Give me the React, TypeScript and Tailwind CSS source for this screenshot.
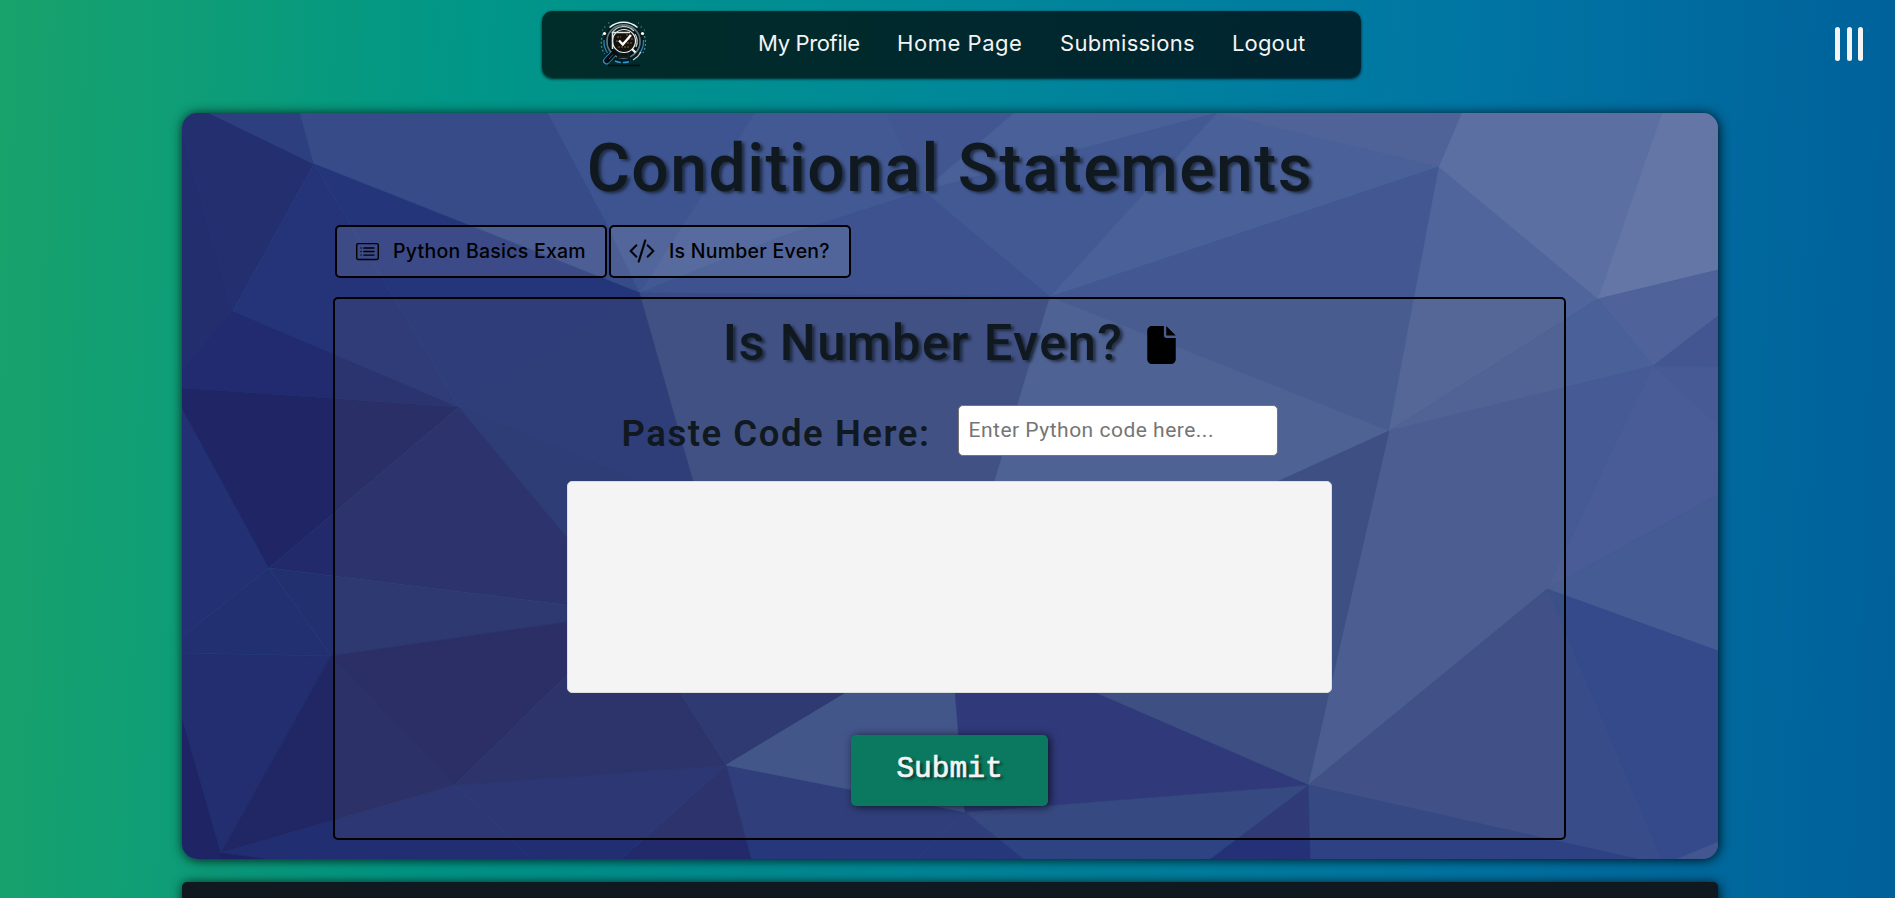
import { FaFile } from "react-icons/fa6";
import { BsCardList, BsCodeSlash } from "react-icons/bs";

type Facet = [points: string, color: string];

const facets: Facet[] = [
  ["182,113 209,113 314,164 233,311 182,372", "#242f70"],
  ["182,130 233,311 182,372", "#232e6f"],
  ["209,113 300,113 314,164", "#2e3f7f"],
  ["300,113 548,113 605,220 640,293 314,164", "#364b87"],
  ["548,113 755,113 640,293 605,220", "#3e5490"],
  ["755,113 887,113 923,191 780,237 640,293", "#435993"],
  ["887,113 1014,113 923,191", "#425791"],
  ["1014,113 1217,113 923,191", "#4a6098"],
  ["923,191 1217,113 1050,297", "#435993"],
  ["1217,113 1439,167 1050,297", "#4a6098"],
  ["1217,113 1462,113 1439,167", "#506399"],
  ["640,293 780,237 923,191 1050,297", "#3d528f"],
  ["1439,167 1389,431 1050,297", "#435892"],
  ["1439,167 1598,299 1389,431", "#50659b"],
  ["1462,113 1662,113 1598,299 1439,167", "#5c6fa3"],
  ["1662,113 1718,113 1718,270 1598,299", "#6476a6"],
  ["1598,299 1718,270 1718,316 1653,366", "#4f6299"],
  ["1653,366 1718,316 1718,367", "#445692"],
  ["1598,299 1653,366 1389,431", "#4a6098"],
  ["1653,366 1718,367 1718,425", "#485a95"],
  ["1653,366 1718,425 1718,495 1547,589 1607,460", "#4a5c97"],
  ["1389,431 1653,366 1607,460 1547,589 1308,785", "#465b95"],
  ["1547,589 1718,495 1718,651", "#455b94"],
  ["1547,589 1718,651 1718,842 1677,859 1662,859", "#344a8a"],
  ["1677,859 1718,842 1718,859", "#44568f"],
  ["1547,589 1662,859 1637,859 1308,785", "#394c8a"],
  ["1308,785 1637,859 1310,859", "#2e4283"],
  ["1308,785 1310,859 1210,859", "#253177"],
  ["965,812 1308,785 1210,859 1023,859", "#2e4382"],
  ["965,812 1023,859 751,859 726,765", "#26377b"],
  ["726,765 751,859 621,859", "#222a6c"],
  ["455,785 726,765 621,859 532,859", "#222e72"],
  ["221,853 455,785 532,859 265,859", "#222e72"],
  ["182,717 221,853 221,859 182,859", "#1f2465"],
  ["221,853 265,859 221,859", "#1e2262"],
  ["182,653 331,656 221,853 182,717", "#222e70"],
  ["331,656 455,785 221,853", "#212765"],
  ["269,568 331,656 182,653 182,637", "#222f71"],
  ["182,408 269,568 182,637", "#233174"],
  ["182,388 459,407 269,568 182,408", "#1f2565"],
  ["459,407 630,613 269,568", "#222a6b"],
  ["269,568 630,613 331,656", "#23306f"],
  ["331,656 630,613 455,785", "#212564"],
  ["630,613 726,765 455,785", "#232a69"],
  ["182,372 233,311 459,407 182,388", "#222b6f"],
  ["233,311 314,164 459,407", "#253478"],
  ["314,164 640,293 459,407", "#25357a"],
  ["459,407 640,293 694,480 730,610 630,613", "#253678"],
  ["459,407 694,505 630,613", "#253576"],
  ["640,293 1050,297 950,630 730,610", "#394c86"],
  ["1050,297 1389,431 950,630", "#495f98"],
  ["1389,431 1308,785 950,630", "#364984"],
  ["630,613 950,630 726,765", "#253071"],
  ["726,765 950,630 965,812", "#3c518c"],
  ["950,630 1308,785 965,812", "#26317a"],
];

const creases = [
  "182,130 233,311",
  "314,164 233,311",
  "314,164 459,407",
  "459,407 269,568",
  "269,568 331,656",
  "269,568 182,637",
  "182,653 331,656",
  "455,785 532,859",
  "726,765 621,859",
  "630,613 726,765",
  "630,613 455,785",
  "965,812 917,859",
  "221,853 455,785",
  "269,568 630,613",
];

function Backdrop() {
  return (
    <svg className="absolute inset-0 h-full w-full" viewBox="182 113 1536 746" preserveAspectRatio="none" aria-hidden="true">
      {facets.map(([points, color]) => (
        <polygon key={points} points={points} fill={color} stroke={color} strokeWidth="0.6" />
      ))}
      {creases.map((points) => (
        <polyline key={points} points={points} fill="none" stroke="#5a6cb0" strokeOpacity="0.1" strokeWidth="1" />
      ))}
    </svg>
  );
}

function Logo() {
  return (
    <svg className="h-[48px] w-[48px]" viewBox="0 0 48 48" fill="none" aria-hidden="true">
      <circle cx="23.5" cy="23.5" r="20" fill="#06191c" />
      <path d="M9.5 8.5A21 21 0 0 1 37.5 8.5" stroke="#eef4f4" strokeWidth="1.5" />
      <path d="M3 15A22 22 0 0 0 4.5 35M44.5 17A22 22 0 0 1 43 34" stroke="#4c8796" strokeWidth="1.2" strokeDasharray="2 2" />
      <path d="M4 21A20 20 0 0 0 7.5 34M43.5 21A20 20 0 0 1 39 35" stroke="#2583bd" strokeWidth="1.3" />
      <path d="M15 42A21 21 0 0 0 31 42" stroke="#2b9bdc" strokeWidth="1.5" strokeDasharray="6 2" />
      <path d="M33 41A20 20 0 0 0 41 33" stroke="#c7d3d4" strokeWidth="1.2" />
      <circle cx="23.5" cy="22.5" r="16.5" stroke="#5d7679" strokeWidth="1.8" />
      <circle cx="23.5" cy="22.5" r="14.6" stroke="#071012" strokeWidth="2" />
      <path d="M12 14A14 14 0 0 1 34 12M35 15A14 14 0 0 1 36 28" stroke="#bccacb" strokeWidth="1.3" />
      <circle cx="24" cy="22" r="11.5" fill="#15120e" stroke="#e6eded" strokeWidth="1.2" />
      <path d="M12.5 30V13.5H30" stroke="#dce6e6" strokeWidth="1.5" />
      <path d="M17 18h4M27 24h6M16 22h3M28 20h5M18 28h12M26 16h4" stroke="#80603a" strokeWidth="1.2" strokeDasharray="2 1" />
      <path d="M19 21.5l3.8 4L31 16" stroke="#fff" strokeWidth="2.4" />
      <path d="M32 30l3.5 3.5" stroke="#f4f4f4" strokeWidth="2.2" />
      <path d="M20 34v4h8v-4M17 38h13" stroke="#101c20" strokeWidth="1.8" />
      <path d="M12 36L6.5 42" stroke="#2e8fca" strokeWidth="7" strokeLinecap="round" />
      <path d="M14 34L7 41.5" stroke="#070c10" strokeWidth="5.4" strokeLinecap="round" />
      <path d="M13 35.5L9 40" stroke="#46575c" strokeWidth="1" />
      <path d="M8 46.5h32" stroke="#050f12" strokeWidth="1.6" />
      <circle cx="4.5" cy="14.5" r="1.6" fill="#fff" />
      <circle cx="42.5" cy="14.5" r="1.6" fill="#fff" />
      <path d="M4 8h1.5M8 4h1.5M42 8h-1.5M2 11h1M44 11h1M38 4h1" stroke="#4e8c92" strokeWidth="1.2" />
    </svg>
  );
}

function NavBar() {
  const link = "whitespace-nowrap";
  return (
    <nav className="ml-[542px] flex h-[67px] w-[819px] rounded-[10px] bg-black/70 pt-[8px] shadow-[0_1px_3px_rgba(0,0,0,0.8)]">
      <div className="ml-[58px] h-[48px] w-[48px]">
        <Logo />
      </div>
      <div className="ml-[110px] flex h-[48px] items-center text-[22px] text-[#f4f4f4]">
        <a className={`w-[139px] tracking-[-0.35px] ${link}`}>My Profile</a>
        <a className={`w-[163px] tracking-[0.55px] ${link}`}>Home Page</a>
        <a className={`w-[172px] tracking-[0.3px] ${link}`}>Submissions</a>
        <a className={`tracking-[0.15px] ${link}`}>Logout</a>
      </div>
    </nav>
  );
}

export default function App() {
  return (
    <div className="h-[898px] w-full overflow-hidden bg-[linear-gradient(92deg,#18a26b_0%,#009688_25%,#008899_50%,#0076a4_76%,#00609a_100%)] font-[Inter,sans-serif]">
      <header className="flex h-[113px] items-start pt-[11px]">
        <NavBar />
        <button aria-label="Menu" className="mt-[16px] ml-[474px] flex gap-[6.5px]">
          <span className="h-[34px] w-[5px] rounded-[3px] bg-[#f4f4f4]" />
          <span className="h-[34px] w-[5px] rounded-[3px] bg-[#f4f4f4]" />
          <span className="h-[34px] w-[5px] rounded-[3px] bg-[#f4f4f4]" />
        </button>
      </header>

      <main className="relative ml-[182px] h-[746px] w-[1536px] rounded-[15px] shadow-[1px_1px_12px_rgba(0,0,0,0.85)]">
        <div className="absolute inset-0 overflow-hidden rounded-[15px]">
          <Backdrop />
        </div>
        <div className="relative flex h-full flex-col">
          <h1 className="mt-[16px] h-[80px] text-center font-[Roboto,sans-serif] text-[66px] leading-[80px] font-medium tracking-[1.5px] text-[#101820] [text-shadow:3px_2px_3px_rgba(16,24,32,0.65)]">
            Conditional Statements
          </h1>

          <div className="mt-[16px] ml-[153px] flex h-[53px] gap-[2px] text-[19.5px] font-medium text-black">
            <button className="flex w-[272px] items-center rounded-[5px] border-2 border-black bg-white/11 pl-[19px] whitespace-nowrap">
              <BsCardList className="mr-[14px] mb-[1px] h-[23px] w-[23px]" />
              <span className="tracking-[0.25px]">Python Basics Exam</span>
            </button>
            <button className="flex w-[242px] items-center rounded-[5px] border-2 border-black bg-white/11 pl-[18px] whitespace-nowrap">
              <BsCodeSlash className="mr-[14px] mb-[2px] h-[26px] w-[26px]" strokeWidth="0.3" />
              <span className="tracking-[0.25px]">Is Number Even?</span>
            </button>
          </div>

          <section className="mt-[19px] ml-[151px] flex h-[543px] w-[1233px] flex-col items-center rounded-[5px] border-2 border-black bg-[rgba(120,120,120,0.12)]">
            <div className="mt-[14px] flex h-[60px] items-center gap-[24px]">
              <h2 className="font-[Roboto,sans-serif] text-[50.5px] leading-[60px] font-medium tracking-[1.45px] text-[#101820] [text-shadow:3px_2px_3px_rgba(16,24,32,0.65)]">
                Is Number Even?
              </h2>
              <FaFile className="mt-[4px] h-[38px] w-[29px] text-black" />
            </div>
            <div className="mt-[32px] flex h-[51px] gap-[27px] font-[Roboto,sans-serif]">
              <label className="mt-[3px] text-[36.5px] leading-[51px] font-semibold tracking-[1.55px] whitespace-nowrap text-[#101820]">Paste Code Here:</label>
              <input
                className="h-[51px] w-[320px] rounded-[5px] border border-[#767676] bg-white px-[10px] pb-[2px] text-[21px] tracking-[0.5px] placeholder:text-[#757575]"
                placeholder="Enter Python code here..."
              />
            </div>
            <div className="mt-[25px] h-[212px] w-[765px] rounded-[5px] border border-[#ddd] bg-[#f4f4f4]" />
            <button className="mt-[42px] h-[71px] w-[197px] rounded-[5px] bg-[#0a795f] pb-[2px] font-['Liberation_Mono',monospace] text-[29.5px] text-[#f4f4f4] shadow-[2px_1px_8px_rgba(0,0,0,0.7)] [-webkit-text-stroke:0.7px_#f4f4f4] [text-shadow:3px_2px_3px_rgba(0,0,0,0.6)]">
              Submit
            </button>
          </section>
        </div>
      </main>

      <footer className="mt-[23px] ml-[182px] h-[60px] w-[1536px] rounded-[5px] bg-[#101820] shadow-[1px_1px_12px_rgba(0,0,0,0.85)]" />
    </div>
  );
}
